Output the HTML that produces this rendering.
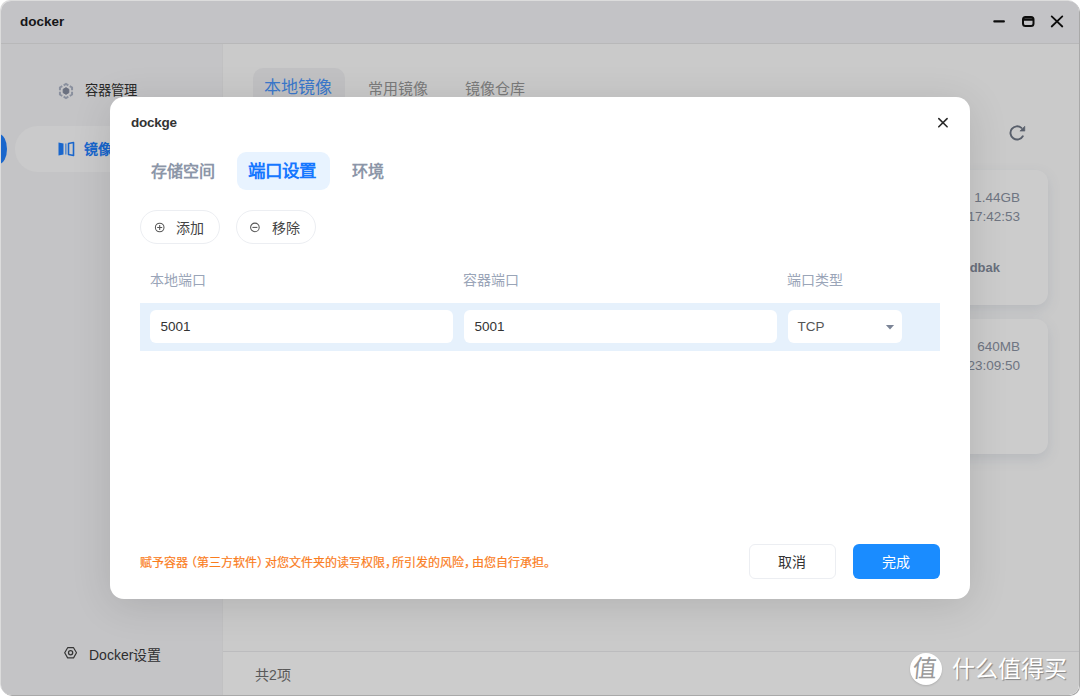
<!DOCTYPE html>
<html lang="zh-CN"><head><meta charset="utf-8">
<style>
*{box-sizing:border-box;margin:0;padding:0}
html,body{width:1080px;height:696px;overflow:hidden;background:#ffffff;font-family:"Liberation Sans",sans-serif}
.abs{position:absolute}
.t{position:absolute;white-space:nowrap;line-height:1}
#win{position:absolute;left:1px;top:1px;width:1078px;height:694px;border-radius:10px;overflow:hidden;background:#f5f5f7;box-shadow:1px 1px 0 0 #a9a9a9,-1px -1px 0 0 #dcdcdc}
#title{left:0;top:0;width:1078px;height:43px;background:#f4f4f8;border-bottom:1px solid #e6e6e8}
#side{left:0;top:43px;width:221px;height:651px;background:#f6f6f8}
#main{left:221px;top:43px;width:857px;height:651px;background:#fdfdfd;border-left:1px solid #f2f2f3}
#overlay{left:0;top:0;width:1080px;height:696px;background:rgba(0,0,0,0.2)}
#dlg{left:110px;top:97px;width:860px;height:502px;background:#fff;border-radius:14px;box-shadow:0 6px 40px rgba(0,0,0,0.12)}
</style></head><body>
<div id="win">
  <div id="title" class="abs">
    <div class="t" style="left:19px;top:14px;font-size:13.5px;font-weight:bold;color:#1c1c1e">docker</div>
    <svg class="abs" style="left:990px;top:12px" width="80" height="20" viewBox="0 0 80 20">
      <path d="M3.3 8.4H12.9" stroke="#111" stroke-width="2.1" stroke-linecap="round"/>
      <rect x="32" y="4" width="10.5" height="9" rx="2.5" fill="none" stroke="#111" stroke-width="2"/>
      <path d="M32 6.5H42.5" stroke="#111" stroke-width="2.5"/>
      <path d="M60.7 3.4L71.3 13.5M71.3 3.4L60.7 13.5" stroke="#111" stroke-width="1.8" stroke-linecap="round"/>
    </svg>
  </div>
  <div id="side" class="abs">
    <!-- container mgmt -->
    <svg class="abs" style="left:55px;top:37px" width="20" height="20" viewBox="0 0 20 20">
      <path d="M13.03 4.75L16.06 6.5V13.5L10 17L3.94 13.5V6.5L10 3Z" fill="none" stroke="#adb4c6" stroke-width="2" stroke-dasharray="5.4 1.6" stroke-dashoffset="-0.8"/>
      <path d="M10 6.6L12.9 8.3V11.7L10 13.4L7.1 11.7V8.3Z" fill="#858c9f" stroke="#858c9f" stroke-width="0.8" stroke-linejoin="round"/>
    </svg>
    <div class="t" style="left:83.5px;top:40.3px;font-size:13.3px;color:#333">容器管理</div>
    <!-- active -->
    <div class="abs" style="left:14px;top:81.5px;width:220px;height:46.5px;border-radius:23px;background:#fdfdfe"></div>
    <div class="abs" style="left:-10px;top:89.5px;width:16px;height:30.5px;border-radius:50%;background:#2080ff"></div>
    <svg class="abs" style="left:56px;top:97px" width="18" height="16" viewBox="0 0 18 16">
      <path d="M1.5 1.5L6.5 2.5V13.5L1.5 14.5Z" fill="#2080ff"/>
      <rect x="8" y="2.5" width="1.6" height="11" fill="#2080ff" opacity="0.6"/>
      <path d="M16.5 1.5L11.5 2.5V13.5L16.5 14.5Z" fill="none" stroke="#2080ff" stroke-width="1.6" stroke-linejoin="round"/>
    </svg>
    <div class="t" style="left:83px;top:97.5px;font-size:14px;font-weight:bold;color:#2080ff">镜像</div>
    <!-- docker settings -->
    <svg class="abs" style="left:61px;top:601px" width="18" height="16" viewBox="0 0 18 16">
      <path d="M2.7 7.8L5.65 2.69H11.55L14.5 7.8L11.55 12.91H5.65Z" fill="none" stroke="#444" stroke-width="1.2" stroke-linejoin="round"/>
      <circle cx="8.6" cy="7.8" r="2.1" fill="none" stroke="#444" stroke-width="1.3"/>
    </svg>
    <div class="t" style="left:88px;top:604px;font-size:14px;color:#3a3a3c">Docker设置</div>
  </div>
  <div id="main" class="abs">
    <div class="abs" style="left:30px;top:24px;width:92px;height:40px;border-radius:10px;background:#f2f2f4"></div>
    <div class="t" style="left:41px;top:34.5px;font-size:17px;color:#4a97ff">本地镜像</div>
    <div class="t" style="left:145px;top:36.5px;font-size:15px;color:#999">常用镜像</div>
    <div class="t" style="left:242px;top:36.5px;font-size:15px;color:#999">镜像仓库</div>
    <svg class="abs" style="left:780px;top:75px" width="28" height="28" viewBox="0 0 28 28">
      <path d="M19.8 17.2A6.6 6.6 0 1 1 18.4 8.9" fill="none" stroke="#6f7786" stroke-width="1.9" stroke-linecap="round"/>
      <path d="M21.8 7.2V12.1H16.9Z" fill="#6f7786" stroke="#6f7786" stroke-width="0.6" stroke-linejoin="round"/>
    </svg>
    <div class="abs" style="left:600px;top:126px;width:225px;height:135px;border-radius:12px;background:#fff;box-shadow:0 5px 14px rgba(70,90,130,0.13)"></div>
    <div class="abs" style="left:600px;top:275px;width:225px;height:135px;border-radius:12px;background:#fff;box-shadow:0 5px 14px rgba(70,90,130,0.13)"></div>
    <div class="t" style="right:59px;top:147px;font-size:13.5px;color:#8b93a3">1.44GB</div>
    <div class="t" style="right:59px;top:166px;font-size:13.5px;color:#8b93a3">17:42:53</div>
    <div class="t" style="right:79px;top:217px;font-size:13px;font-weight:bold;color:#858d9d">dbak</div>
    <div class="t" style="right:59px;top:296px;font-size:13.5px;color:#8b93a3">640MB</div>
    <div class="t" style="right:59px;top:315px;font-size:13.5px;color:#8b93a3">23:09:50</div>
    <div class="abs" style="left:0;top:607px;width:856px;height:44px;background:#fff;border-top:1px solid #ececee"></div>
    <div class="t" style="left:32px;top:624px;font-size:14px;color:#707070">共2项</div>
  </div>
<div id="overlay" class="abs"></div>
</div>
<div id="dlg" class="abs">
  <div class="t" style="left:21px;top:19px;font-size:13.5px;font-weight:bold;color:#333;letter-spacing:-0.25px">dockge</div>
  <svg class="abs" style="left:826px;top:19px" width="14" height="14" viewBox="0 0 14 14">
    <path d="M2.8 2.6L11.1 10.8M11.1 2.6L2.8 10.8" stroke="#2a2a2a" stroke-width="1.6" stroke-linecap="round"/>
  </svg>
  <!-- tabs -->
  <div class="t" style="left:41px;top:67.3px;font-size:16px;font-weight:bold;color:#8c96a8">存储空间</div>
  <div class="abs" style="left:127px;top:55px;width:93px;height:38px;border-radius:9px;background:#e8f3ff"></div>
  <div class="t" style="left:138px;top:65.8px;font-size:17.5px;font-weight:bold;color:#1677ff">端口设置</div>
  <div class="t" style="left:242px;top:67.3px;font-size:16px;font-weight:bold;color:#8c96a8">环境</div>
  <!-- buttons -->
  <div class="abs" style="left:30px;top:113px;width:80px;height:34px;border-radius:17px;border:1px solid #eceef2"></div>
  <svg class="abs" style="left:44px;top:125px" width="12" height="12" viewBox="0 0 12 12">
    <circle cx="5.7" cy="5.5" r="4.3" fill="none" stroke="#555" stroke-width="1.05"/>
    <path d="M5.7 3V8M3.2 5.5H8.2" stroke="#555" stroke-width="1.05"/>
  </svg>
  <div class="t" style="left:66px;top:123.5px;font-size:14px;color:#444">添加</div>
  <div class="abs" style="left:126px;top:113px;width:80px;height:34px;border-radius:17px;border:1px solid #eceef2"></div>
  <svg class="abs" style="left:139px;top:125px" width="12" height="12" viewBox="0 0 12 12">
    <circle cx="5.9" cy="5.4" r="4.3" fill="none" stroke="#555" stroke-width="1.05"/>
    <path d="M3.4 5.4H8.4" stroke="#555" stroke-width="1.05"/>
  </svg>
  <div class="t" style="left:162px;top:123.5px;font-size:14px;color:#444">移除</div>
  <!-- table -->
  <div class="t" style="left:40px;top:176px;font-size:14px;color:#9aa5b8">本地端口</div>
  <div class="t" style="left:353px;top:176px;font-size:14px;color:#9aa5b8">容器端口</div>
  <div class="t" style="left:677px;top:176px;font-size:14px;color:#9aa5b8">端口类型</div>
  <div class="abs" style="left:30px;top:206px;width:800px;height:48px;background:#e6f1fc"></div>
  <div class="abs" style="left:40px;top:213px;width:303px;height:33px;border-radius:6px;background:#fff"></div>
  <div class="abs" style="left:354px;top:213px;width:313px;height:33px;border-radius:6px;background:#fff"></div>
  <div class="abs" style="left:678px;top:213px;width:114px;height:33px;border-radius:6px;background:#fff"></div>
  <div class="t" style="left:50.5px;top:222.5px;font-size:13.5px;color:#333">5001</div>
  <div class="t" style="left:364.5px;top:222.5px;font-size:13.5px;color:#333">5001</div>
  <div class="t" style="left:687.5px;top:222.5px;font-size:13.5px;color:#555">TCP</div>
  <svg class="abs" style="left:775px;top:227px" width="10" height="6" viewBox="0 0 10 6">
    <path d="M0.9 0.9H9.1L5 5.6Z" fill="#7b8496"/>
  </svg>
  <!-- footer -->
  <div class="t" style="left:30px;top:460px;font-size:12px;color:#fa7d1e;-webkit-text-stroke:0.2px #fa7d1e">赋予容器<span style="margin-left:-3px">（</span>第三方软件<span style="margin-right:-4.5px">）</span>对您文件夹的读写权限<span style="margin-right:-4.5px">，</span>所引发的风险<span style="margin-right:-4.5px">，</span>由您自行承担<span style="margin-right:-4px">。</span></div>
  <div class="abs" style="left:639px;top:447px;width:87px;height:35px;border-radius:6px;border:1px solid #eceef2"></div>
  <div class="t" style="left:668px;top:458px;font-size:14px;color:#333">取消</div>
  <div class="abs" style="left:743px;top:447px;width:87px;height:35px;border-radius:6px;background:#1a8cff"></div>
  <div class="t" style="left:772px;top:458px;font-size:14px;color:#fff">完成</div>
</div>
<!-- watermark -->
<div class="abs" style="left:910px;top:653px;width:32px;height:32px;border-radius:16px;background:#fff;box-shadow:0 1px 2px rgba(0,0,0,0.15)"></div>
<div class="t" style="left:913px;top:657px;font-size:24px;color:#9a9a9a;transform:skewX(-6deg)">值</div>
<div class="t" style="left:952px;top:658px;font-size:23px;color:#fff;text-shadow:1px 1px 1px rgba(0,0,0,0.35)">什么值得买</div>
</body></html>
